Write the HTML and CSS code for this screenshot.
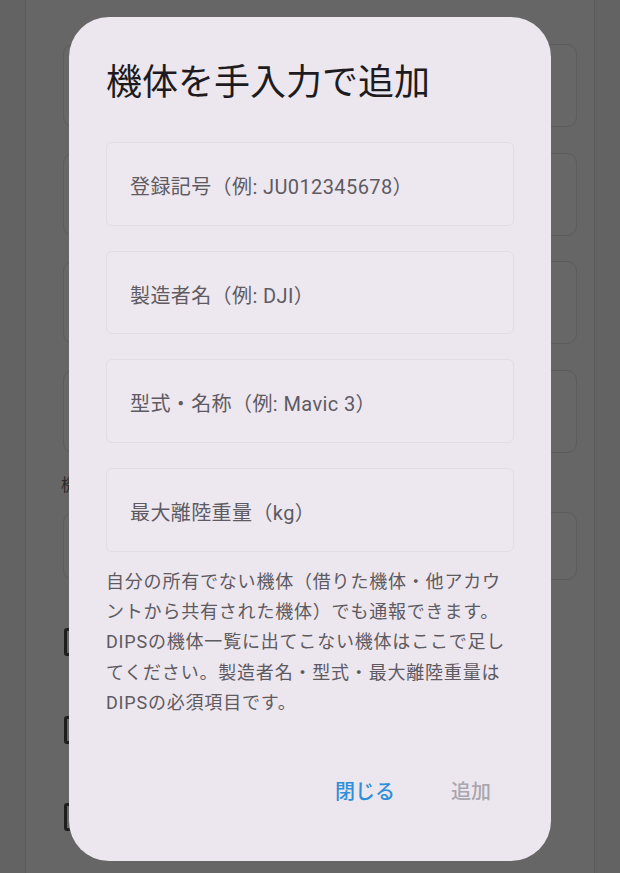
FILE: index.html
```html
<!DOCTYPE html>
<html lang="ja">
<head>
<meta charset="utf-8">
<link rel="stylesheet" href="styles.css">
</head>
<body>
<div class="screen">
  <div class="strip"></div>
  <div class="panel">
    <div class="bg-field"></div>
    <div class="bg-field"></div>
    <div class="bg-field"></div>
    <div class="bg-field"></div>
    <div class="bg-label">機体の種類</div>
    <div class="bg-field short"></div>
    <div class="bg-check-row first"><span class="bg-check"></span></div>
    <div class="bg-check-row"><span class="bg-check"></span></div>
    <div class="bg-check-row"><span class="bg-check"></span></div>
  </div>
  <div class="strip"></div>

  <div class="dialog">
    <h1 class="title">機体を手入力で追加</h1>
    <div class="fields">
      <div class="field">登録記号（例: JU012345678）</div>
      <div class="field">製造者名（例: DJI）</div>
      <div class="field">型式・名称（例: Mavic 3）</div>
      <div class="field">最大離陸重量（kg）</div>
    </div>
    <p class="note">自分の所有でない機体（借りた機体・他アカウントから共有された機体）でも通報できます。DIPSの機体一覧に出てこない機体はここで足してください。製造者名・型式・最大離陸重量はDIPSの必須項目です。</p>
    <div class="actions">
      <button class="btn primary">閉じる</button>
      <button class="btn disabled">追加</button>
    </div>
  </div>
</div>
</body>
</html>
```
FILE: styles.css
```css
html, body {
  margin: 0;
  padding: 0;
}
body {
  width: 620px;
  height: 873px;
  overflow: hidden;
  background: #636363;
  font-family: Roboto, "Noto Sans CJK JP", sans-serif;
}
.screen {
  position: relative;
  display: flex;
  width: 620px;
  height: 873px;
}
.strip {
  width: 25px;
  flex: none;
  background: #636363;
}
.panel {
  flex: 1;
  background: #666666;
  border-left: 1px solid #595959;
  border-right: 1px solid #595959;
  padding: 44px 17px 0 37px;
  display: flex;
  flex-direction: column;
}
.bg-field {
  height: 81px;
  border: 1px solid #5c5c5c;
  border-radius: 10px;
  background: #676767;
  margin-bottom: 25.5px;
  flex: none;
}
.bg-field:nth-child(4) {
  margin-bottom: 14.5px;
}
.bg-label {
  height: 36px;
  line-height: 36px;
  font-size: 17px;
  color: #2a2a2a;
  margin-left: -2px;
  flex: none;
}
.bg-field.short {
  height: 66px;
  margin-top: 9px;
  margin-bottom: 0;
}
.bg-check-row {
  height: 87.5px;
  display: flex;
  align-items: center;
  flex: none;
}
.bg-check-row.first {
  margin-top: 18.5px;
}
.bg-check {
  width: 22px;
  height: 22px;
  border: 3px solid #1e1e1e;
  border-radius: 3px;
  margin-left: 1px;
}

.dialog {
  position: absolute;
  left: 69px;
  top: 17px;
  width: 482px;
  height: 844px;
  box-sizing: border-box;
  background: #ece6ee;
  border-radius: 40px;
  padding: 44px 36px 41px 37px;
  display: flex;
  flex-direction: column;
}
.title {
  margin: 0;
  font-size: 36px;
  line-height: 44px;
  font-weight: 400;
  color: #1d1b20;
}
.fields {
  margin-top: 37px;
  display: flex;
  flex-direction: column;
  gap: 25px;
  margin-right: 1px;
}
.field {
  height: 83.7px;
  box-sizing: border-box;
  border: 1px solid #e2dce4;
  border-radius: 6px;
  background: #ede7ef;
  padding: 3px 23px 0;
  display: flex;
  align-items: center;
  font-size: 20px;
  letter-spacing: 0.4px;
  color: #5e5b62;
}
.note {
  margin: 15px 1px 0 0;
  font-size: 18px;
  line-height: 30.3px;
  letter-spacing: 0.8px;
  color: #5d5a61;
}
.actions {
  margin-top: auto;
  display: flex;
  justify-content: flex-end;
  gap: 8px;
}
.btn {
  height: 60px;
  padding: 0 24px;
  border: none;
  background: transparent;
  font-family: inherit;
  font-size: 20px;
  font-weight: 500;
  cursor: pointer;
}
.btn.primary {
  color: #2e8fd8;
}
.btn.disabled {
  color: #a9a6ad;
}
```
